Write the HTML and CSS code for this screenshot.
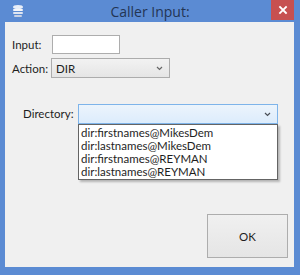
FILE: index.html
```html
<!DOCTYPE html>
<html>
<head>
<meta charset="utf-8">
<link rel="stylesheet" href="styles.css">
</head>
<body>
<div class="window">
  <div class="titlebar">
    <svg class="app-icon" width="14" height="14" viewBox="0 0 14 14">
      <ellipse cx="7" cy="3" rx="5" ry="2" fill="#e8eef8"/>
      <rect x="2" y="5" width="10" height="2" rx="1" fill="#f4f6fa"/>
      <rect x="2" y="8" width="10" height="2" rx="1" fill="#dfe6f2"/>
      <rect x="3" y="11" width="8" height="2" rx="1" fill="#c8d2e4"/>
    </svg>
    <div class="title">Caller Input:</div>
    <div class="close">
      <svg width="10" height="10" viewBox="0 0 10 10"><path d="M2 2 L8 8 M8 2 L2 8" stroke="#fff" stroke-width="1.8" stroke-linecap="square"/></svg>
    </div>
  </div>
  <div class="client">
    <div class="row row-input">
      <span class="label">Input:</span>
      <div class="textbox"></div>
    </div>
    <div class="row row-action">
      <span class="label">Action:</span>
      <div class="select">
        <span>DIR</span>
        <svg class="chev" width="7" height="5" viewBox="0 0 7 5"><path d="M1 1 L3.5 3.5 L6 1" fill="none" stroke="#666" stroke-width="1.2"/></svg>
      </div>
    </div>
    <div class="row row-dir">
      <span class="label dir-label">Directory:</span>
      <div class="combo-wrap">
        <div class="combo">
          <svg class="chev" width="7" height="5" viewBox="0 0 7 5"><path d="M1 1 L3.5 3.5 L6 1" fill="none" stroke="#4a4f57" stroke-width="1.2"/></svg>
        </div>
        <ul class="list">
          <li>dir:firstnames@MikesDem</li>
          <li>dir:lastnames@MikesDem</li>
          <li>dir:firstnames@REYMAN</li>
          <li>dir:lastnames@REYMAN</li>
        </ul>
      </div>
    </div>
    <div class="footer">
      <div class="ok">OK</div>
    </div>
  </div>
</div>
</body>
</html>
```

FILE: styles.css
```css
html, body {
  margin: 0;
  padding: 0;
}
body {
  font-family: Lato, "Open Sans", sans-serif;
  font-size: 11.5px;
  color: #1e1e1e;
}
.window {
  width: 300px;
  height: 275px;
  background: #5b8bd3;
  display: flex;
  flex-direction: column;
}
.titlebar {
  height: 22px;
  display: flex;
  align-items: flex-start;
  position: relative;
}
.app-icon {
  margin: 4px 0 0 11px;
}
.title {
  position: absolute;
  left: 0;
  right: 0;
  top: 2px;
  text-align: center;
  font-family: "Open Sans", sans-serif;
  font-size: 14px;
  color: #233553;
}
.close {
  position: absolute;
  right: 6px;
  top: 0;
  width: 23px;
  height: 20px;
  background: #c75050;
  display: flex;
  align-items: center;
  justify-content: center;
}
.client {
  margin: 0 6px 8px 5px;
  height: 245px;
  background: #f0f0f0;
  display: flex;
  flex-direction: column;
  box-sizing: border-box;
  padding-top: 13px;
}
.row {
  display: flex;
  align-items: center;
}
.label {
  padding-left: 7px;
}
.row-input .label {
  width: 40px;
}
.textbox {
  width: 66px;
  height: 17px;
  background: #fff;
  border: 1px solid #adadad;
}
.row-action {
  margin-top: 4px;
}
.row-action .label {
  width: 39px;
}
.select {
  width: 107px;
  height: 18px;
  border: 1px solid #acacac;
  background: linear-gradient(#f2f2f2, #e5e5e5);
  display: flex;
  align-items: center;
  justify-content: space-between;
  padding: 0 6px 0 4px;
}
.row-dir {
  margin-top: 26px;
  align-items: flex-start;
}
.dir-label {
  padding-left: 18px;
  width: 55px;
  line-height: 20px;
}
.combo-wrap {
  position: relative;
  width: 200px;
}
.combo {
  height: 18px;
  border: 1px solid #7eb4ea;
  background: linear-gradient(#ecf4fc, #dcecfc);
  display: flex;
  align-items: center;
  justify-content: flex-end;
  padding-right: 6px;
}
.list {
  position: absolute;
  left: 0;
  top: 20px;
  width: 198px;
  margin: 0;
  padding: 1px 0;
  list-style: none;
  background: #fff;
  border: 1px solid #646464;
  box-shadow: 2px 2px 2px rgba(0,0,0,0.25);
}
.list li {
  height: 13px;
  line-height: 13px;
  padding-left: 2px;
}
.footer {
  margin-top: auto;
  display: flex;
  justify-content: flex-end;
  padding: 0 6px 9px 0;
}
.ok {
  width: 79px;
  height: 42px;
  border: 1px solid #adadad;
  background: linear-gradient(#f0f0f0, #e5e5e5);
  display: flex;
  align-items: center;
  justify-content: center;
}
```
